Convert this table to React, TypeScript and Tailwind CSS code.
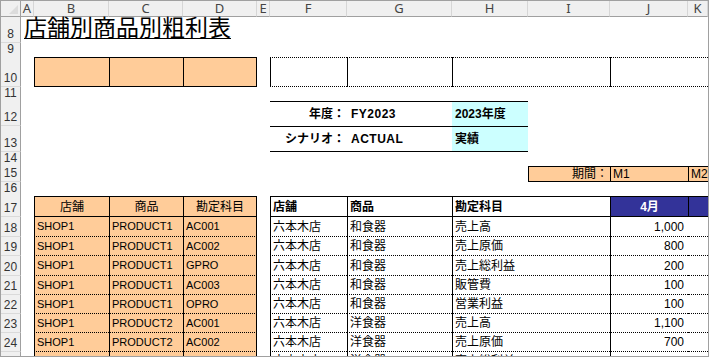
const COLS = "grid grid-cols-[20px_13px_75px_74px_74px_13px_77px_105px_76px_82px_78px_1fr]";

const LETTERS = ["A", "B", "C", "D", "E", "F", "G", "H", "I", "J", "K"];

const leftRows = [
  ["SHOP1", "PRODUCT1", "AC001"],
  ["SHOP1", "PRODUCT1", "AC002"],
  ["SHOP1", "PRODUCT1", "GPRO"],
  ["SHOP1", "PRODUCT1", "AC003"],
  ["SHOP1", "PRODUCT1", "OPRO"],
  ["SHOP1", "PRODUCT2", "AC001"],
  ["SHOP1", "PRODUCT2", "AC002"],
  ["SHOP1", "PRODUCT2", "GPRO"],
];

const rightRows = [
  ["六本木店", "和食器", "売上高", "1,000"],
  ["六本木店", "和食器", "売上原価", "800"],
  ["六本木店", "和食器", "売上総利益", "200"],
  ["六本木店", "和食器", "販管費", "100"],
  ["六本木店", "和食器", "営業利益", "100"],
  ["六本木店", "洋食器", "売上高", "1,100"],
  ["六本木店", "洋食器", "売上原価", "700"],
  ["六本木店", "洋食器", "売上総利益", "400"],
];

const rowHeights = ["h-[20px]", "h-[19px]", "h-[20px]", "h-[19px]", "h-[19px]", "h-[19px]", "h-[19px]", "h-[19px]"];

function Row({ h, children }: { h: string; children: React.ReactNode }) {
  return <div className={`${COLS} ${h}`}>{children}</div>;
}

function RowHead({ n }: { n: number }) {
  return (
    <div className="flex items-end justify-center border-r border-b border-r-[#a0a0a0] border-b-[#dadada] bg-[#f0f0f0] pb-[2px] text-[12px] leading-none text-[#333]">
      {n}
    </div>
  );
}

const leftCell =
  "flex items-center overflow-hidden whitespace-nowrap bg-[#ffcc99] border-l border-b border-black [border-bottom-style:dotted] pl-[2px] text-[11px]";
const rightCell =
  "flex items-center overflow-hidden whitespace-nowrap border-l border-b border-black [border-bottom-style:dotted] pl-[2px] text-[12px]";
const dotted = "border-t border-b border-black [border-top-style:dotted] [border-bottom-style:dotted]";

export default function App() {
  return (
    <div className="h-[358px] w-[709px] overflow-hidden bg-white font-['Liberation_Sans','Noto_Sans_CJK_JP',sans-serif] text-black">
      <div className="h-[357px] w-full overflow-hidden border border-[#a0a0a0]">
        {/* column letters */}
        <Row h="h-[16px]">
          <div className="flex items-end justify-end border-r border-b border-[#a0a0a0] bg-[#f0f0f0] p-[2px]">
            <svg width="9" height="9" viewBox="0 0 9 9">
              <polygon points="9,0 9,9 0,9" fill="#dcdcdc" />
            </svg>
          </div>
          {LETTERS.map((l) => (
            <div
              key={l}
              className="flex items-center justify-center border-r border-b border-r-[#d6d6d6] border-b-[#a0a0a0] bg-[#f0f0f0] font-['Noto_Sans',sans-serif] text-[13px] leading-none text-[#444]"
            >
              {l}
            </div>
          ))}
        </Row>

        {/* title */}
        <Row h="h-[26px]">
          <RowHead n={8} />
          <div className="col-span-11 flex items-end whitespace-nowrap pb-[3px] pl-[3px] text-[23px] leading-none underline decoration-1 underline-offset-[2px]">
            店舗別商品別粗利表
          </div>
        </Row>

        <Row h="h-[14px]">
          <RowHead n={9} />
        </Row>

        {/* filter boxes */}
        <Row h="h-[30px]">
          <RowHead n={10} />
          <div />
          <div className="border-t border-b border-l border-black bg-[#ffcc99]" />
          <div className="border-t border-b border-l border-black bg-[#ffcc99]" />
          <div className="border border-black bg-[#ffcc99]" />
          <div />
          <div className={`${dotted} border-l [border-left-style:solid]`} />
          <div className={`${dotted} border-l [border-left-style:solid]`} />
          <div className={`${dotted} col-span-2 border-l [border-left-style:solid]`} />
          <div className={`${dotted} col-span-2 border-l [border-left-style:solid]`} />
        </Row>

        <Row h="h-[14px]">
          <RowHead n={11} />
        </Row>

        {/* fiscal year / scenario */}
        <Row h="h-[25px]">
          <RowHead n={12} />
          <div />
          <div />
          <div />
          <div />
          <div />
          <div className="flex items-center justify-end border-t border-black pr-[2px] text-[12px] font-bold">年度：</div>
          <div className="flex items-center border-t border-black pl-[4px] text-[12px] font-bold tracking-[0.5px]">FY2023</div>
          <div className="flex items-center border-t border-black bg-[#ccffff] pl-[3px] text-[12px] font-bold">2023年度</div>
        </Row>
        <Row h="h-[26px]">
          <RowHead n={13} />
          <div />
          <div />
          <div />
          <div />
          <div />
          <div className="flex items-center justify-end border-t border-b border-black pr-[2px] text-[12px] font-bold">シナリオ：</div>
          <div className="flex items-center border-t border-b border-black pl-[4px] text-[12px] font-bold tracking-[0.5px]">ACTUAL</div>
          <div className="flex items-center border-t border-b border-black bg-[#ccffff] pl-[3px] text-[12px] font-bold">実績</div>
        </Row>

        <Row h="h-[14px]">
          <RowHead n={14} />
        </Row>

        {/* period */}
        <Row h="h-[16px]">
          <RowHead n={15} />
          <div />
          <div />
          <div />
          <div />
          <div />
          <div />
          <div />
          <div />
          <div className="flex items-center justify-end border-t border-b border-l border-black bg-[#ffcc99] pr-[2px] text-[12px] leading-none">期間：</div>
          <div className="flex items-center border-t border-b border-l border-black bg-[#ffcc99] pl-[2px] text-[12px] leading-none">M1</div>
          <div className="flex items-center border-t border-b border-l border-black bg-[#ffcc99] pl-[2px] text-[12px] leading-none">M2</div>
        </Row>

        <Row h="h-[14px]">
          <RowHead n={16} />
        </Row>

        {/* table headers */}
        <Row h="h-[21px]">
          <RowHead n={17} />
          <div />
          <div className="flex items-center justify-center border-t border-b border-l border-black bg-[#ffcc99] text-[12px]">店舗</div>
          <div className="flex items-center justify-center border-t border-b border-l border-black bg-[#ffcc99] text-[12px]">商品</div>
          <div className="flex items-center justify-center border border-black bg-[#ffcc99] text-[12px]">勘定科目</div>
          <div />
          <div className="flex items-center border-t border-b border-l border-black pl-[2px] text-[12px] font-bold">店舗</div>
          <div className="flex items-center border-t border-b border-l border-black pl-[2px] text-[12px] font-bold">商品</div>
          <div className="col-span-2 flex items-center border-t border-b border-l border-black pl-[2px] text-[12px] font-bold">勘定科目</div>
          <div className="flex items-center justify-center border-t border-b border-l border-black bg-[#333399] text-[12px] font-bold text-white">4月</div>
          <div className="border-t border-b border-l border-black bg-[#333399]" />
        </Row>

        {leftRows.map((l, i) => {
          const r = rightRows[i];
          return (
            <Row key={i} h={rowHeights[i]}>
              <RowHead n={18 + i} />
              <div />
              <div className={leftCell}>{l[0]}</div>
              <div className={leftCell}>{l[1]}</div>
              <div className={`${leftCell} border-r`}>{l[2]}</div>
              <div />
              <div className={rightCell}>{r[0]}</div>
              <div className={rightCell}>{r[1]}</div>
              <div className={`${rightCell} col-span-2`}>{r[2]}</div>
              <div className={`${rightCell} justify-end pr-[4px] text-[11px]`}>{r[3]}</div>
              <div className="border-b border-black [border-bottom-style:dotted]" />
            </Row>
          );
        })}
      </div>
    </div>
  );
}
